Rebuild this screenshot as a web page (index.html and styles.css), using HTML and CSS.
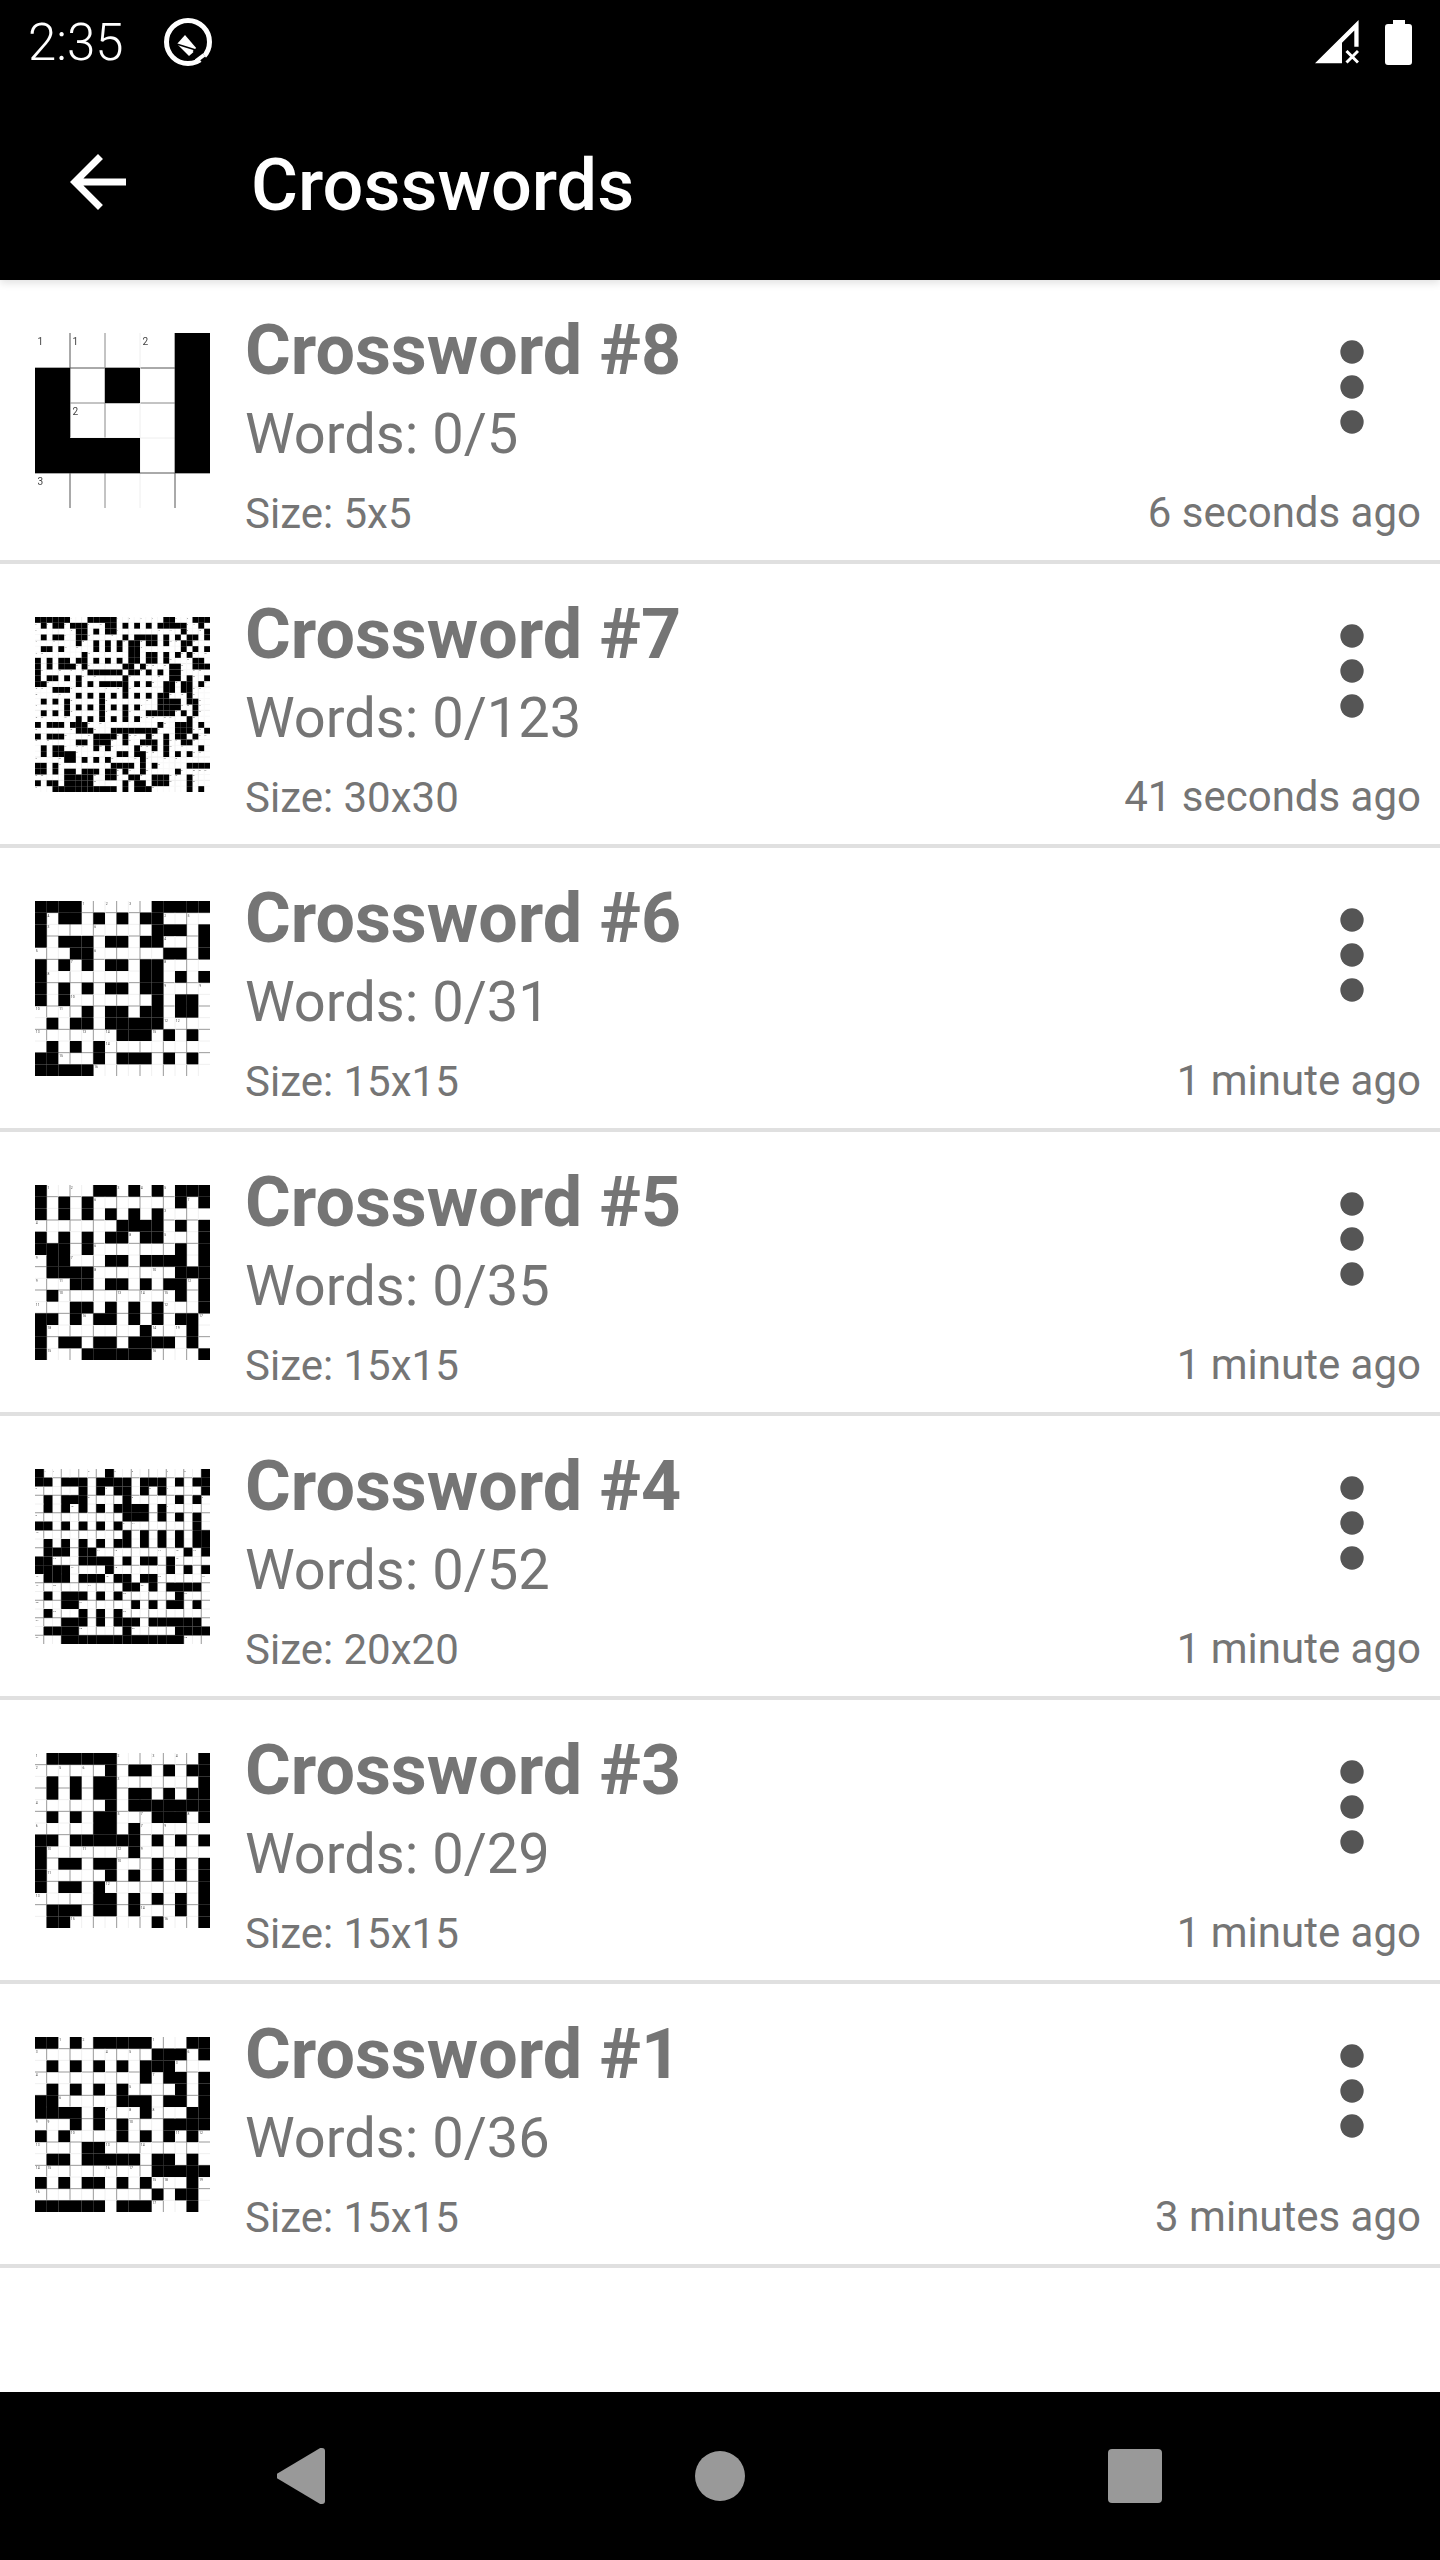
FILE: index.html
```html
<!DOCTYPE html>
<html lang="en">
<head>
    <meta charset="UTF-8">
    <meta name="viewport" content="width=device-width, initial-scale=1.0">
    <title>Crosswords</title>
    <link rel="stylesheet" href="styles.css">
</head>
<body>
    <header class="header">
        <div class="status-bar">
            <span class="time">2:35</span>
            <svg class="status-q" viewBox="0 0 50 50">
                <circle cx="25" cy="25" r="21.5" fill="none" stroke="#fff" stroke-width="5"/>
                <path d="M22 18 14 27 26 39 34 32Z" fill="#fff"/>
                <path d="M12 26.5 36 34" stroke="#000" stroke-width="1.5"/>
                <path d="M32 32 45 48" stroke="#000" stroke-width="6"/>
                <path d="M33 44 41 38" stroke="#fff" stroke-width="4"/>
            </svg>
            <svg class="status-signal" viewBox="0 0 44 44">
                <path d="M0 43.3 43.6 0V26.7H39.3V10.5L27 22.8V43.3Z" fill="#fff"/>
                <path d="M31.5 31 43 42.5M43 31 31.5 42.5" stroke="#fff" stroke-width="3"/>
            </svg>
            <svg class="status-battery" viewBox="0 0 27 45">
                <path d="M8 0H20V4H24Q27 4 27 7V42Q27 45 24 45H3Q0 45 0 42V7Q0 4 3 4H8Z" fill="#fff"/>
            </svg>
        </div>
        <div class="toolbar">
            <svg class="back-arrow" viewBox="0 0 24 24">
                <path d="M20 11H7.83l5.59-5.59L12 4l-8 8 8 8 1.41-1.41L7.83 13H20v-2z" fill="#fff"/>
            </svg>
            <h1>Crosswords</h1>
        </div>
    </header>

    <main class="list">
        <div class="row">
            <div class="thumb" data-grid="c8"></div>
            <div class="info">
                <div class="name">Crossword #8</div>
                <div class="words">Words: 0/5</div>
                <div class="size">Size: 5x5</div>
            </div>
            <div class="side">
                <svg class="more" viewBox="0 0 24 24"><circle cx="12" cy="6" r="2"/><circle cx="12" cy="12" r="2"/><circle cx="12" cy="18" r="2"/></svg>
                <div class="ago">6 seconds ago</div>
            </div>
        </div>
        <div class="row">
            <div class="thumb" data-grid="c7"></div>
            <div class="info">
                <div class="name">Crossword #7</div>
                <div class="words">Words: 0/123</div>
                <div class="size">Size: 30x30</div>
            </div>
            <div class="side">
                <svg class="more" viewBox="0 0 24 24"><circle cx="12" cy="6" r="2"/><circle cx="12" cy="12" r="2"/><circle cx="12" cy="18" r="2"/></svg>
                <div class="ago">41 seconds ago</div>
            </div>
        </div>
        <div class="row">
            <div class="thumb" data-grid="c6"></div>
            <div class="info">
                <div class="name">Crossword #6</div>
                <div class="words">Words: 0/31</div>
                <div class="size">Size: 15x15</div>
            </div>
            <div class="side">
                <svg class="more" viewBox="0 0 24 24"><circle cx="12" cy="6" r="2"/><circle cx="12" cy="12" r="2"/><circle cx="12" cy="18" r="2"/></svg>
                <div class="ago">1 minute ago</div>
            </div>
        </div>
        <div class="row">
            <div class="thumb" data-grid="c5"></div>
            <div class="info">
                <div class="name">Crossword #5</div>
                <div class="words">Words: 0/35</div>
                <div class="size">Size: 15x15</div>
            </div>
            <div class="side">
                <svg class="more" viewBox="0 0 24 24"><circle cx="12" cy="6" r="2"/><circle cx="12" cy="12" r="2"/><circle cx="12" cy="18" r="2"/></svg>
                <div class="ago">1 minute ago</div>
            </div>
        </div>
        <div class="row">
            <div class="thumb" data-grid="c4"></div>
            <div class="info">
                <div class="name">Crossword #4</div>
                <div class="words">Words: 0/52</div>
                <div class="size">Size: 20x20</div>
            </div>
            <div class="side">
                <svg class="more" viewBox="0 0 24 24"><circle cx="12" cy="6" r="2"/><circle cx="12" cy="12" r="2"/><circle cx="12" cy="18" r="2"/></svg>
                <div class="ago">1 minute ago</div>
            </div>
        </div>
        <div class="row">
            <div class="thumb" data-grid="c3"></div>
            <div class="info">
                <div class="name">Crossword #3</div>
                <div class="words">Words: 0/29</div>
                <div class="size">Size: 15x15</div>
            </div>
            <div class="side">
                <svg class="more" viewBox="0 0 24 24"><circle cx="12" cy="6" r="2"/><circle cx="12" cy="12" r="2"/><circle cx="12" cy="18" r="2"/></svg>
                <div class="ago">1 minute ago</div>
            </div>
        </div>
        <div class="row">
            <div class="thumb" data-grid="c1"></div>
            <div class="info">
                <div class="name">Crossword #1</div>
                <div class="words">Words: 0/36</div>
                <div class="size">Size: 15x15</div>
            </div>
            <div class="side">
                <svg class="more" viewBox="0 0 24 24"><circle cx="12" cy="6" r="2"/><circle cx="12" cy="12" r="2"/><circle cx="12" cy="18" r="2"/></svg>
                <div class="ago">3 minutes ago</div>
            </div>
        </div>
    </main>

    <nav class="nav-bar">
        <span class="nav-back"></span>
        <span class="nav-home"></span>
        <span class="nav-recent"></span>
    </nav>

    <script src="grids.js"></script>
</body>
</html>
```

FILE: styles.css
```css
* {
    box-sizing: border-box;
}

body {
    margin: 0;
    height: 2560px;
    overflow: hidden;
    display: flex;
    flex-direction: column;
    background: #fff;
    font-family: Roboto, "Liberation Sans", sans-serif;
}

.header {
    position: relative;
    z-index: 1;
    height: 280px;
    background: #000;
    color: #fff;
    box-shadow: 0 3px 8px rgba(0, 0, 0, 0.12);
}

.status-bar {
    display: flex;
    align-items: center;
    height: 84px;
    padding-left: 28px;
}

.time {
    font-size: 51px;
    font-weight: 300;
}

.status-q {
    width: 50px;
    height: 50px;
    margin-left: 39px;
}

.status-signal {
    width: 44px;
    height: 44px;
    margin-left: auto;
}

.status-battery {
    width: 27px;
    height: 45px;
    margin: 0 28px 0 26px;
}

.toolbar {
    display: flex;
    align-items: center;
    height: 196px;
    padding-left: 56px;
}

.back-arrow {
    width: 84px;
    height: 84px;
}

.toolbar h1 {
    margin: 6px 0 0 111px;
    font-size: 72px;
    font-weight: 500;
}

.list {
    flex: 1;
}

.row {
    display: flex;
    align-items: center;
    height: 284px;
    padding: 0 19px 0 35px;
    border-bottom: 4px solid #e0e0e0;
}

.thumb {
    width: 175px;
    height: 175px;
}

.thumb svg {
    display: block;
    width: 175px;
    height: 175px;
    filter: blur(0.35px);
}

.info {
    flex: 1;
    margin-left: 35px;
    padding-top: 8px;
    color: #757575;
}

.name {
    font-size: 70px;
    font-weight: 700;
    line-height: 96px;
}

.words {
    font-size: 56px;
    line-height: 72px;
}

.size {
    font-size: 42px;
    line-height: 64px;
    margin-top: 12px;
}

.side {
    display: flex;
    flex-direction: column;
    align-items: flex-end;
    height: 280px;
    padding-top: 37px;
}

.more {
    width: 140px;
    height: 140px;
    margin-right: -1px;
    fill: #555;
}

.ago {
    margin-top: auto;
    margin-bottom: 15px;
    color: #757575;
    font-size: 42px;
    line-height: 64px;
}

.nav-bar {
    display: flex;
    align-items: center;
    height: 168px;
    padding-left: 277px;
    background: #000;
}

.nav-back {
    width: 48px;
    height: 56px;
    background: #999;
    border-radius: 3px;
    clip-path: polygon(100% 0, 100% 100%, 90% 100%, 0 54%, 0 46%, 90% 0);
}

.nav-home {
    width: 50px;
    height: 50px;
    margin: 0 363px 0 370px;
    background: #999;
    border-radius: 50%;
}

.nav-recent {
    width: 54px;
    height: 54px;
    background: #999;
    border-radius: 4px;
}
```

FILE: grids.js
```js
// black cells of each puzzle, # = black
const GRIDS = {
    c8: ["....#", "#.#.#", "#...#", "###.#", "....."],
    c7: [
        "######...#####........##...###",
        ".#.##.###...##.#.#.#.#####..#.",
        ".......##.#.##...........#...#",
        ".#.##..##......#.####.#.#.##.#",
        ".......#..#.#.#.##.##.#..##...",
        ".##.#.....#.#.#.##.......#.#.#",
        "........#.......##.##.#.#.#...",
        "#.#.##.##.#.#.#.##.##.#....##.",
        "#.#.###.#......##.#....##..###",
        "#........######.##.#.#.##.....",
        "#.##.#.#.......#.......##.#..#",
        "##.....#.#.#####.#.#..##.##.#.",
        "...###.........#......##.##...",
        ".......#.#.#.#.#.#.#.##...#...",
        ".#.#.#.....#.........####.##..",
        ".....#.#.#.#.#.#.#...####..#..",
        ".#.#.#.....#...#...#####.#.#..",
        ".......#.#.#.#.#.#........#...",
        "#.###.###............#..###.#.",
        ".......###...########...###..#",
        "#.###.....####.#...#..#.##.#..",
        ".......##.###..#..###.#..##...",
        ".#.##.....#.#....#..#.#.....#.",
        ".#.####.......##.##...#.#.#...",
        ".....##.#.#.#.....#...........",
        "##.#.........####.#.#.....####",
        "##.#.##.###.##.#..#.....#.....",
        ".....#####..##..##..###...#...",
        "#.##.#####.....#.##.###...#...",
        "...###########.#.###......#.#."
    ],
    c6: [
        "####......#####",
        "#.##.#.#.##....",
        "#.........###.#",
        "#.###.##.##...#",
        "...##......##.#",
        "#.#.#.##.##....",
        "#........##.#.#",
        "#.#.#.##.##....",
        "#.#.......#.##.",
        "....#.##.##.##.",
        ".#.##.#####....",
        ".......###.#.#.",
        ".#.#.#.........",
        "##...#.###.#.#.",
        "#####.........."
    ],
    c5: [
        "#....##.#.#.###",
        "#.#.#.......#.#",
        "#.#.#.#.#.#....",
        ".......####.#.#",
        "#.#.#.##.##...#",
        "###.#.......#.#",
        ".##...##.####.#",
        ".####.......###",
        "...##.##.#.##.#",
        ".#..........#.#",
        "...##.#.#.#...#",
        "##.#.##.#.#.##.",
        "#........#...#.",
        "#.##.##.####.#.",
        "#...######....#"
    ],
    c4: [
        "#.......#..........#",
        "##.###.####.###.#.##",
        ".....#.#.##.#.#....#",
        ".#.###....#.....#.#.",
        ".#.#.#.#.####.#.....",
        "..........###.#.#.#.",
        "##.#.#.#.#........#.",
        "..........#.#.#.#.##",
        ".#.#.#.#.##.#.#.#.##",
        ".###.##..........#.#",
        "##...####.#.##.#....",
        "####....#......#.#.#",
        ".###.###.##.##......",
        "..........##.#.####.",
        ".#.###.#.#......#...",
        "...##......#.#.##.#.",
        ".#...#.#.#..........",
        "...###.#.###.######.",
        ".####.....#.....####",
        "...##############..."
    ],
    c3: [
        ".######.......#",
        "......#.##.#.##",
        ".#.#.##.......#",
        ".#.#.##.##.#.##",
        "......#.#######",
        ".#.#.##...###.#",
        ".....##.#......",
        "##.######.#.#.#",
        "#.......#......",
        "#.##.##...#.#.#",
        "#.....#.#.#.#.#",
        "#.##.#........#",
        ".....##.#.#.#.#",
        ".###.##.#...#.#",
        ".##.......#...#"
    ],
    c1: [
        "##.#.#####...##",
        "..........###.#",
        ".#.#.#.#.###...",
        ".........#.##.#",
        ".#.#.#.#....#.#",
        "##.....###.##.#",
        "####.#...#...##",
        "...#.#.#...####",
        "#.#....#.#.#.#.",
        "....##.........",
        ".##.#####.##.#.",
        "..........#####",
        "#.#.##.#.#...#.",
        "..........#.##.",
        "######.###...#."
    ]
};

function lineColor(n, i) {
    if (n === 5) return ["", "#555", "#888", "#eee", "#555"][i];
    if (n === 30) return i % 4 === 0 ? "#eee" : "#f8f8f8";
    return i % 2 ? "#999" : "#f0f0f0";
}

function isWhite(rows, r, c) {
    return r >= 0 && c >= 0 && r < rows.length && c < rows.length && rows[r][c] === ".";
}

function drawGrid(rows) {
    const n = rows.length;
    const cell = 175 / n;
    let lines = "";
    let black = "";
    let labels = "";
    let across = 0;
    let down = 0;

    for (let i = 1; i < n; i++) {
        const p = (i * cell).toFixed(2);
        lines += `<path d="M${p} 0V175M0 ${p}H175" stroke="${lineColor(n, i)}"/>`;
    }

    for (let r = 0; r < n; r++) {
        for (let c = 0; c < n; c++) {
            const x = c * cell;
            const y = r * cell;
            if (!isWhite(rows, r, c)) {
                black += `<rect x="${x.toFixed(2)}" y="${y.toFixed(2)}" width="${cell.toFixed(2)}" height="${cell.toFixed(2)}"/>`;
                continue;
            }
            // across and down words are counted on their own
            let label = 0;
            if (!isWhite(rows, r, c - 1) && isWhite(rows, r, c + 1)) label = ++across;
            if (!isWhite(rows, r - 1, c) && isWhite(rows, r + 1, c)) label = ++down;
            if (label) {
                labels += `<text x="${(x + cell * 0.07).toFixed(2)}" y="${(y + cell * 0.34).toFixed(2)}" font-size="${(cell * 0.29).toFixed(2)}">${label}</text>`;
            }
        }
    }

    return `<svg viewBox="0 0 175 175">${lines}<g fill="#000">${black}</g><g fill="#444" font-family="Roboto, sans-serif">${labels}</g></svg>`;
}

document.querySelectorAll(".thumb").forEach(function(thumb) {
    thumb.innerHTML = drawGrid(GRIDS[thumb.dataset.grid]);
});
```
